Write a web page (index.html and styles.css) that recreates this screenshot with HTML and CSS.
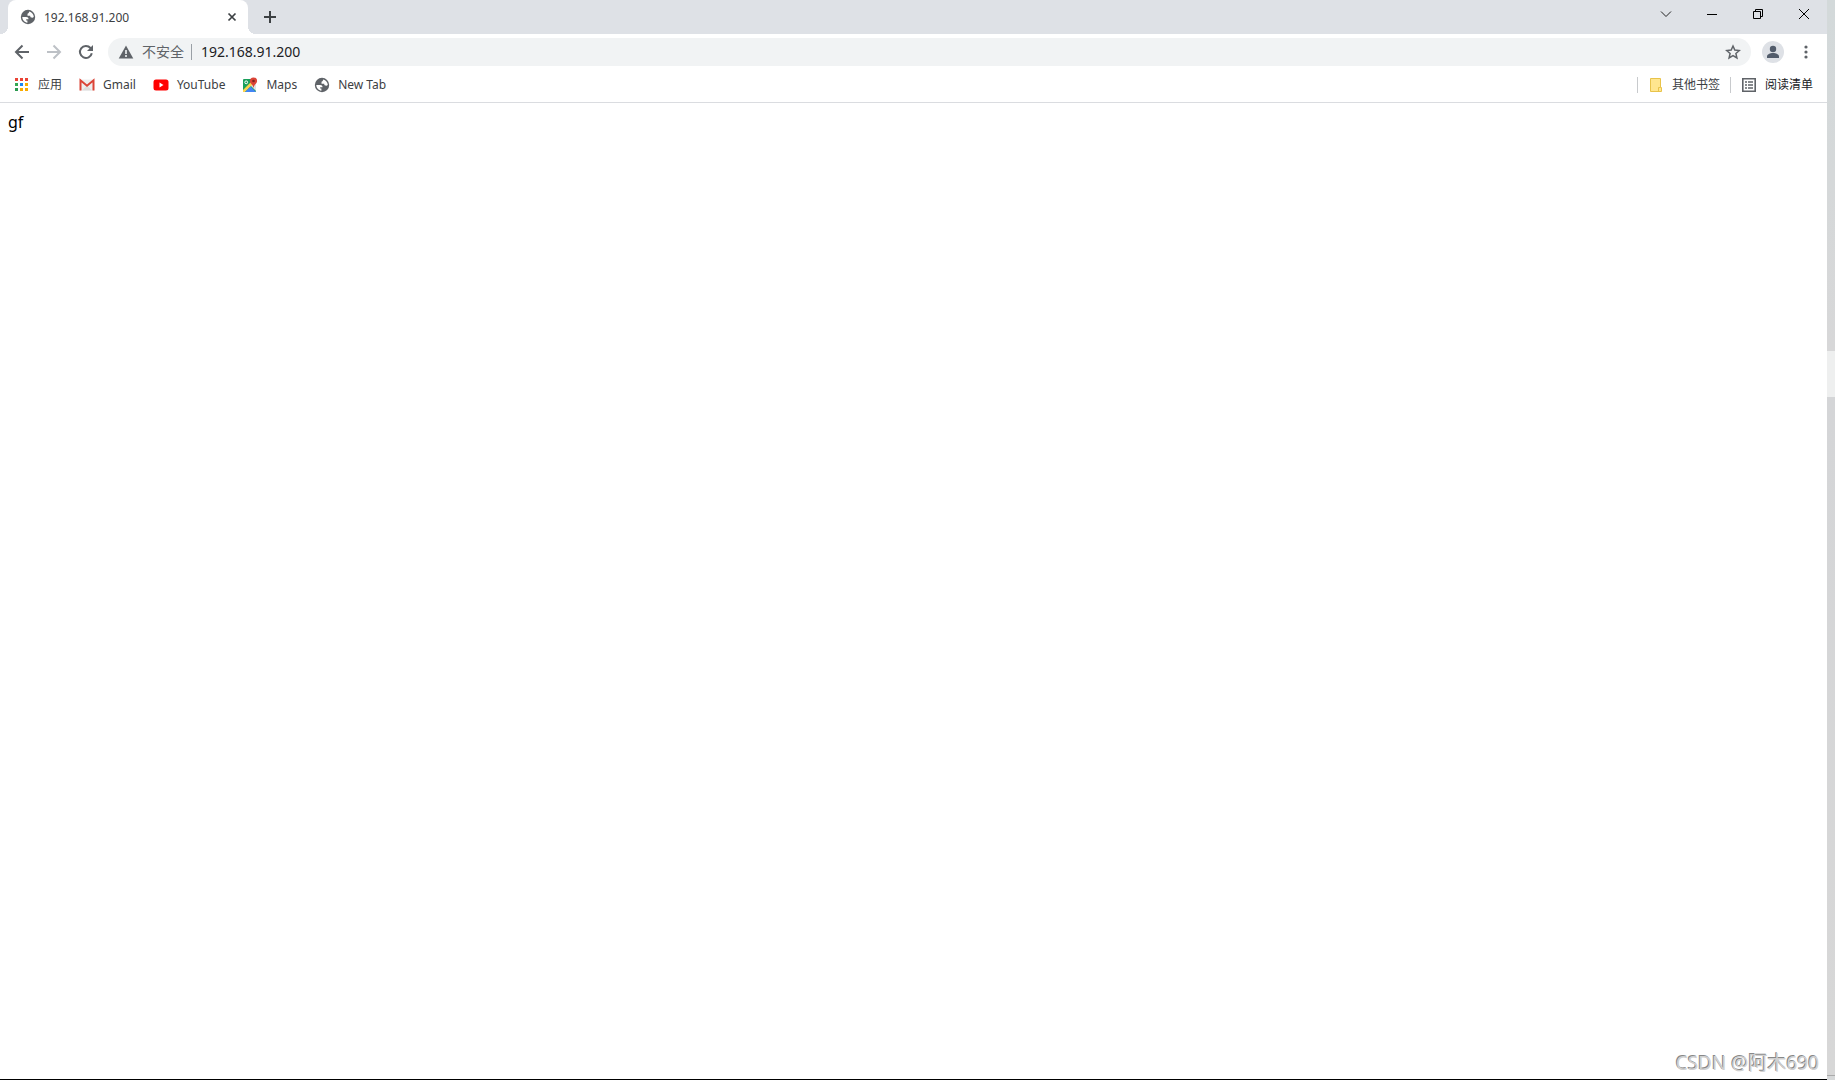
FILE: index.html
```html
<!DOCTYPE html>
<html lang="zh-CN">
<head>
<meta charset="utf-8">
<title>192.168.91.200</title>
<link rel="stylesheet" href="styles.css">
</head>
<body>
<svg class="defs" aria-hidden="true">
  <symbol id="globe" viewBox="0 0 16 16">
    <circle cx="8" cy="8" r="7.200" fill="#5f6368"/>
    <path fill="#fff" d="M9.300 2.500c2.500.7 4.300 2.800 4.500 5.300-.5.800-1.300 1-2.200.8-1-.2-1.400-.9-1.400-1.900H7.500V5.500c0-.9.500-1.300 1.300-1.400 0-.7 0-1.200.5-1.600z"/>
    <path fill="#fff" d="M2.300 8h3.800c1.700 0 2.500.7 2.400 2.200H6.200v1.300h1.200v2.200C4.500 13.400 2.300 11 2.300 8z"/>
  </symbol>
</svg>
<div class="screen">
  <div class="browser">
    <header class="tabstrip">
      <div class="tab">
        <svg class="icon"><use href="#globe"/></svg>
        <span class="tab-title">192.168.91.200</span>
        <button class="tab-close" aria-label="关闭"><svg width="10" height="10" viewBox="0 0 10 10"><path d="M1.500 1.500l7 7m0-7l-7 7" stroke="#3c4043" stroke-width="1.700"/></svg></button>
      </div>
      <button class="new-tab" aria-label="新标签页"><svg width="14" height="14" viewBox="0 0 14 14"><path d="M7 1v12M1 7h12" stroke="#3c4043" stroke-width="2"/></svg></button>
      <div class="window-buttons">
        <button aria-label="搜索标签页"><svg width="12" height="12" viewBox="0 0 12 12"><path d="M1 3.500l5 5 5-5" fill="none" stroke="#222"/></svg></button>
        <button aria-label="最小化"><svg width="12" height="12" viewBox="0 0 12 12"><path d="M1 6.500h10" stroke="#000"/></svg></button>
        <button aria-label="还原"><svg width="12" height="12" viewBox="0 0 12 12"><path d="M1.500 3.500h7v7h-7zM3.500 3.500v-2h7v7h-2" fill="none" stroke="#000"/></svg></button>
        <button aria-label="关闭窗口"><svg width="12" height="12" viewBox="0 0 12 12"><path d="M1 1l10 10M11 1L1 11" stroke="#000"/></svg></button>
      </div>
    </header>
    <div class="toolbar">
      <button class="nav" aria-label="后退"><svg class="icon" viewBox="0 0 16 16"><path d="M15 8H2.500M8.500 1.500L2 8l6.500 6.500" fill="none" stroke="#5f6368" stroke-width="2"/></svg></button>
      <button class="nav" aria-label="前进"><svg class="icon" viewBox="0 0 16 16"><path d="M1 8h12.500M7.500 1.500L14 8l-6.500 6.500" fill="none" stroke="#bdc1c6" stroke-width="2"/></svg></button>
      <button class="nav" aria-label="重新加载"><svg class="icon" viewBox="0 0 16 16"><path d="M13.800 9.200A6 6 0 1 1 12.500 4L14 5.500" fill="none" stroke="#5f6368" stroke-width="2"/><path d="M15 1v6H9z" fill="#5f6368"/></svg></button>
      <form class="omnibox">
        <button class="security" type="button">
          <svg class="icon" viewBox="0 0 16 16"><path d="M8 1.500L15.300 14.500H.7z" fill="#5f6368"/><path d="M8 6v4M8 11v2" stroke="#f1f3f4" stroke-width="1.600"/></svg>
          <span>不安全</span>
        </button>
        <input class="url" type="text" aria-label="地址" value="192.168.91.200">
        <button class="star" type="button" aria-label="收藏"><svg class="icon" viewBox="0 0 16 16"><path d="M8 2l1.800 4.100 4.500.4-3.400 3 1 4.400L8 11.600l-3.900 2.300 1-4.400-3.400-3 4.500-.4z" fill="none" stroke="#5f6368" stroke-width="1.500"/></svg></button>
      </form>
      <button class="profile" aria-label="个人资料"><svg width="22" height="22" viewBox="0 0 22 22"><circle cx="11" cy="11" r="11" fill="#dee1e6"/><circle cx="11" cy="8" r="3.200" fill="#525c6b"/><path d="M5 17v-1.500c0-2 3-3.500 6-3.500s6 1.500 6 3.500V17z" fill="#525c6b"/></svg></button>
      <button class="menu" aria-label="菜单"><svg class="icon" viewBox="0 0 16 16" fill="#5f6368"><circle cx="8" cy="3" r="1.600"/><circle cx="8" cy="8" r="1.600"/><circle cx="8" cy="13" r="1.600"/></svg></button>
    </div>
    <nav class="bookmarks">
      <a href="#apps"><svg class="icon" viewBox="0 0 16 16"><path d="M1 1h3v3H1zM6 1h3v3H6zM11 1h3v3h-3z" fill="#ea4335"/><path d="M1 6h3v3H1z" fill="#34a853"/><path d="M6 6h3v3H6z" fill="#1a86f5"/><path d="M11 6h3v3h-3zM6 11h3v3H6zM11 11h3v3h-3z" fill="#f9ab00"/><path d="M1 11h3v3H1z" fill="#2b9a50"/></svg>应用</a>
      <a href="#gmail"><svg class="icon" viewBox="0 0 16 16"><path d="M1 2.500h14v11H1z" fill="#eee"/><path d="M3 13.500l5-5 5 5z" fill="#ddd"/><path d="M1.500 13.500V3.300L8 8.700l6.500-5.400v10.200" fill="none" stroke="#db4437" stroke-width="2"/></svg>Gmail</a>
      <a href="#youtube"><svg class="icon" viewBox="0 0 16 16"><rect x=".5" y="2.500" width="15" height="11" rx="2.500" fill="#f00"/><path d="M6.500 5.500v5l4-2.500z" fill="#fff"/></svg>YouTube</a>
      <a href="#maps"><svg class="icon" viewBox="0 0 16 16"><rect x="1" y="2" width="13" height="13" rx="1" fill="#1a9f5b"/><path d="M8 8l5-5 1 1v10z" fill="#dfe3e6"/><path d="M1 13L12 2l2 2L3 15H1z" fill="#fbd34c"/><path d="M3 15l5.500-5.500L14 15z" fill="#4285f4"/><circle cx="4.200" cy="5.300" r="1.400" fill="none" stroke="#fff"/><path d="M11.500.5a3.600 3.600 0 0 0-3.600 3.700c0 2.300 3 3 3.400 6.300h.4c.4-3.300 3.400-4 3.400-6.300A3.600 3.600 0 0 0 11.500.5z" fill="#db4437"/><circle cx="11.500" cy="4" r="1.300" fill="#7b231c"/></svg>Maps</a>
      <a href="#newtab"><svg class="icon"><use href="#globe"/></svg>New Tab</a>
      <span class="spacer"></span>
      <a class="divided" href="#other"><svg class="icon" viewBox="0 0 16 16"><path d="M2.500 1.500h10v9h1v4h-11z" fill="#ffe68f" stroke="#e8c34a"/><path d="M10.500 14v-3.500h2" fill="none" stroke="#e8c34a"/></svg>其他书签</a>
      <a class="divided reading" href="#reading"><svg class="icon" viewBox="0 0 16 16"><path d="M1.800 1.800h12.400v12.400H1.800z" fill="none" stroke="#5f6368" stroke-width="1.600"/><path d="M4 5h2M7 5h5M4 8h2M7 8h5M4 11h2M7 11h5" stroke="#5f6368" stroke-width="1.400"/></svg>阅读清单</a>
    </nav>
    <main class="page">gf<p class="watermark">CSDN @阿木690</p></main>
  </div>
  <aside class="edge"><div class="edge-top"></div><div class="edge-gap"></div><div class="edge-rest"></div><div class="edge-foot"></div></aside>
</div>
</body>
</html>
```
FILE: styles.css
```css
* { box-sizing: border-box; }
body {
  margin: 0;
  background: #fff;
  color: #3c4043;
  font: 12px/16px "Noto Sans", "Noto Sans CJK SC", sans-serif;
}
button, input { font: inherit; color: inherit; border: 0; padding: 0; background: none; }
button { display: flex; align-items: center; justify-content: center; }
svg { display: block; flex: none; }
.defs { position: absolute; width: 0; height: 0; }
.icon { width: 16px; height: 16px; }
.screen { display: flex; min-height: 100vh; }
.browser { flex: 1; display: flex; flex-direction: column; border-bottom: 1px solid #000; }

.tabstrip { display: flex; height: 34px; padding-left: 8px; background: #dee1e6; }
.tab {
  position: relative;
  display: flex;
  align-items: center;
  gap: 8px;
  width: 240px;
  padding: 0 11px 0 12px;
  background: #fff;
  border-radius: 8px 8px 0 0;
}
.tab::before, .tab::after {
  content: "";
  position: absolute;
  bottom: 0;
  width: 8px;
  height: 8px;
}
.tab::before { left: -8px; background: radial-gradient(circle at 0 0, #dee1e6 8px, #fff 8px); }
.tab::after { right: -8px; background: radial-gradient(circle at 100% 0, #dee1e6 8px, #fff 8px); }
.tab-title { flex: 1; padding-top: 1px; }
.new-tab { width: 28px; margin-left: 8px; }
.window-buttons { display: flex; height: 28px; margin-left: auto; }
.window-buttons button { width: 46px; }

.toolbar { display: flex; align-items: center; height: 36px; padding: 0 14px; }
.nav { width: 16px; height: 28px; margin-right: 16px; }
.nav:nth-child(3) { margin-right: 14px; }
.omnibox {
  flex: 1;
  display: flex;
  align-items: center;
  height: 28px;
  padding: 0 10px;
  border-radius: 14px;
  background: #f1f3f4;
  font-size: 14px;
}
.security { gap: 8px; height: 16px; padding-right: 7px; border-right: 1px solid #9aa0a6; color: #5f6368; }
.url { flex: 1; height: 28px; padding: 0 0 2px 9px; color: #202124; }
.profile { margin-left: 11px; }
.menu { margin-left: 14px; margin-right: -1px; }

.bookmarks { display: flex; align-items: center; gap: 17px; height: 33px; padding: 0 14px 2px; border-bottom: 1px solid #dadce0; }
.bookmarks a { display: flex; align-items: center; gap: 8px; color: #3c4043; text-decoration: none; }
.spacer { flex: 1; }
.divided { padding-left: 10px; border-left: 1px solid #c8cacd; }
.bookmarks .reading { margin-left: -7px; color: #202124; }

.page { flex: 1; display: flex; flex-direction: column; padding: 8px; color: #000; font-size: 16px; line-height: 22px; }
.watermark {
  margin: auto 0 0 auto;
  color: #d0d0d0;
  font-size: 19px;
  line-height: 16px;
  text-shadow: -1px -1px 0 #888;
}
.edge { display: flex; flex-direction: column; width: 8px; background: #d6d8d9; }
.edge-top { height: 351px; background: linear-gradient(#d3d9da, #d7d7d8); }
.edge-gap { height: 46px; background: #eeefef; }
.edge-rest { flex: 1; background: linear-gradient(#d4d5d7, #d7d7d7); }
.edge-foot { height: 5px; border-top: 1px solid #aaa; }
```
